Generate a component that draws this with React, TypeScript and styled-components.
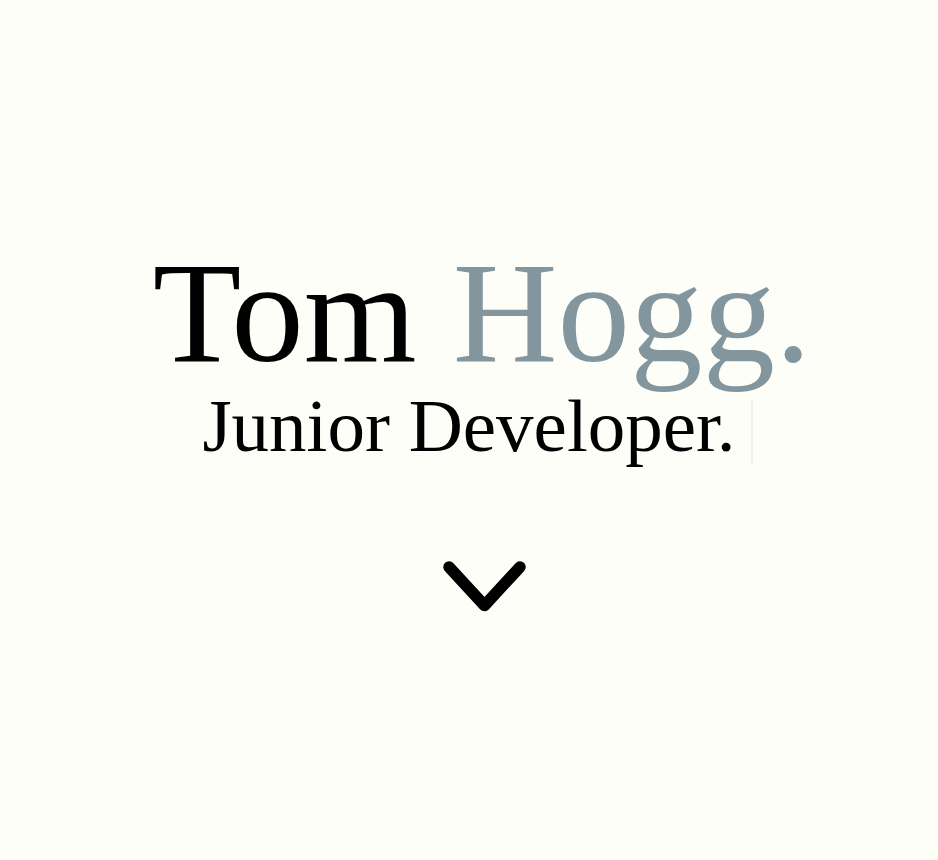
import styled, { createGlobalStyle } from 'styled-components';

const GlobalStyle = createGlobalStyle`
  html,
  body {
    margin: 0;
    padding: 0;
    background-color: #fdfef8;
  }

  body {
    font-family: 'Liberation Serif', Georgia, serif;
    color: #000;
  }
`;

function App() {
  return (
    <>
      <GlobalStyle />
      <Hero>
        <Title>
          Tom <Accent>Hogg.</Accent>
        </Title>
        <Subtitle>
          Junior Developer.
          <Caret />
        </Subtitle>
        <ScrollButton aria-label="Scroll down">
          <svg width="94" height="60" viewBox="0 0 94 60">
            <polyline
              points="11,10 46.5,48.5 82,10"
              fill="none"
              stroke="#000"
              strokeWidth="11.5"
              strokeLinecap="round"
              strokeLinejoin="round"
            />
          </svg>
        </ScrollButton>
      </Hero>
    </>
  );
}

const Hero = styled.section`
  display: flex;
  flex-direction: column;
  align-items: center;
  box-sizing: border-box;
  min-height: 100vh;
  padding-top: 240px;
`;

const Title = styled.h1`
  margin: 0;
  padding-left: 26px;
  font-size: 145px;
  font-weight: 400;
  line-height: 1;
  letter-spacing: 0;
  white-space: nowrap;
`;

const Accent = styled.span`
  color: #83969e;
`;

const Subtitle = styled.h2`
  position: relative;
  margin: 3px 0 0;
  font-size: 75px;
  font-weight: 400;
  line-height: 1;
  white-space: nowrap;
`;

const Caret = styled.span`
  position: absolute;
  top: 13px;
  right: -17px;
  width: 2px;
  height: 63px;
  background-color: #eeefe8;
`;

const ScrollButton = styled.button`
  display: flex;
  margin: 94px 0 0 32px;
  padding: 0;
  border: none;
  background: none;
  cursor: pointer;
`;

export default App;
